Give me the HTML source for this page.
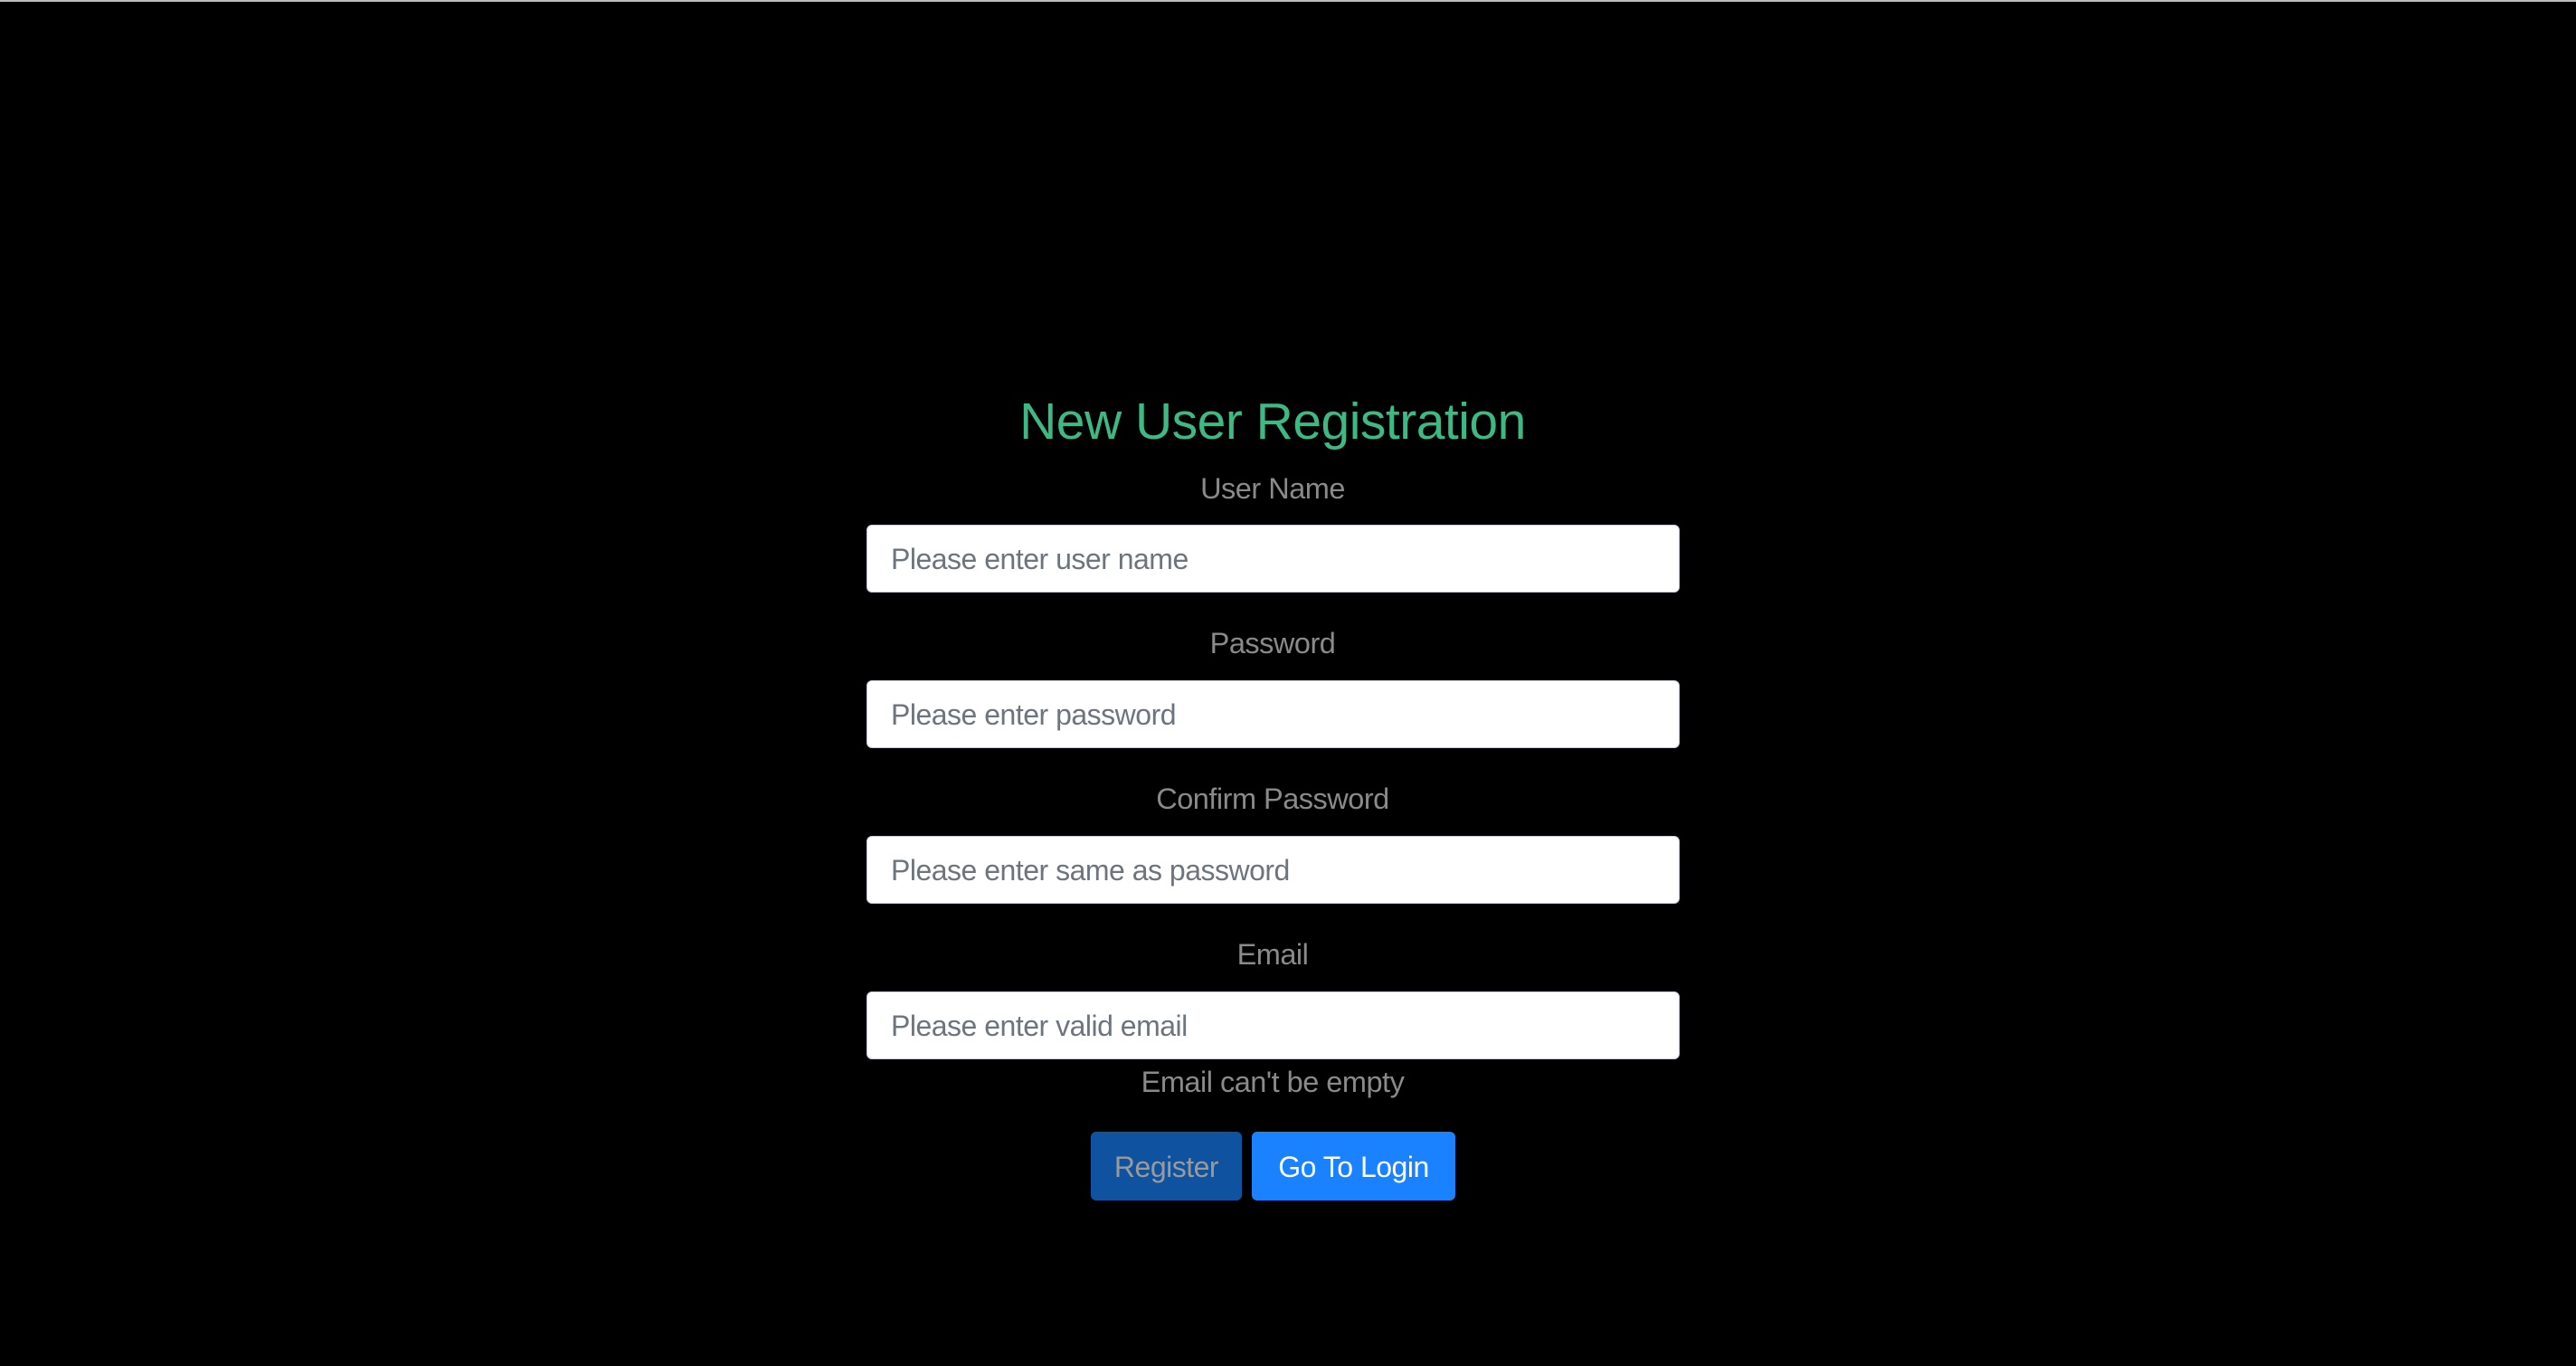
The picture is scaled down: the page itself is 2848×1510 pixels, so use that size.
<!DOCTYPE html>
<html><head><style>
html,body{margin:0;padding:0;background:#000;width:2848px;height:1510px;overflow:hidden;font-family:"Liberation Sans",sans-serif;}
.top{position:absolute;left:0;top:0;width:2848px;height:2px;background:#bbb;}
.c{position:absolute;left:0;width:2814px;text-align:center;}
.t{color:#3dba84;font-size:57px;top:430px;line-height:72px;letter-spacing:-0.5px;}
.l{color:#8a8a8a;font-size:32.5px;line-height:40px;letter-spacing:-0.5px;}
.in{position:absolute;left:958px;width:897px;height:73px;background:#fff;border:1px solid #ccd;border-radius:6px;box-sizing:content-box;}
.in span{position:absolute;left:26px;top:1px;line-height:73px;font-size:32px;color:#6c757d;letter-spacing:-0.5px;}
.b{position:absolute;top:1251px;height:76px;line-height:78px;border-radius:6px;font-size:32px;text-align:center;letter-spacing:-0.5px;}
</style></head><body>
<div class="top"></div>
<div class="c t">New User Registration</div>
<div class="c l" style="top:520px">User Name</div>
<div class="in" style="top:580px"><span>Please enter user name</span></div>
<div class="c l" style="top:691px">Password</div>
<div class="in" style="top:752px"><span>Please enter password</span></div>
<div class="c l" style="top:863px">Confirm Password</div>
<div class="in" style="top:924px"><span>Please enter same as password</span></div>
<div class="c l" style="top:1035px">Email</div>
<div class="in" style="top:1096px"><span>Please enter valid email</span></div>
<div class="c l" style="top:1176px">Email can't be empty</div>
<div class="b" style="left:1206px;width:167px;background:#0f52a0;color:#9a9a9a;">Register</div>
<div class="b" style="left:1384px;width:225px;background:#1a82ff;color:#fff;">Go To Login</div>
</body></html>
